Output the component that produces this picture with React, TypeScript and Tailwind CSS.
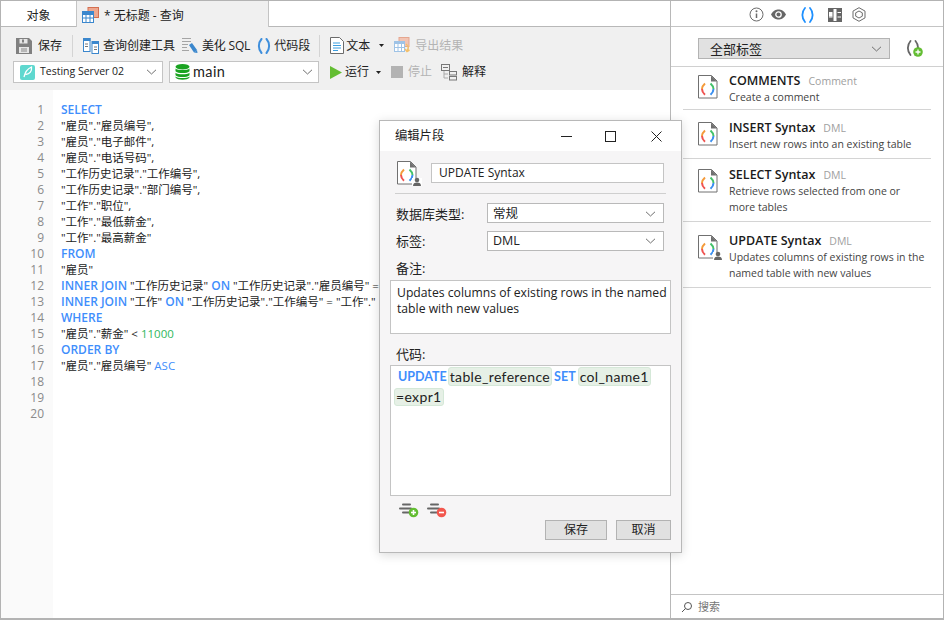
import React from "react";

const FONT = `"Open Sans","Noto Sans CJK SC",sans-serif`;

const Chevron = ({ c = "#6e6e6e" }: { c?: string }) => (
  <svg width="11" height="6" viewBox="0 0 11 6" fill="none"><path d="M1 .8 5.500 5 10 .8" stroke={c} strokeWidth="1" /></svg>
);
const Caret = () => (
  <svg width="5" height="3" viewBox="0 0 5 3"><path d="M0 0h5L2.500 3z" fill="#222" /></svg>
);
const Parens = ({ l = "#3f8fdc", r = "#3f8fdc", w = 14, h = 16, sw = 2 }: { l?: string; r?: string; w?: number; h?: number; sw?: number }) => (
  <svg width={w} height={h} viewBox="0 0 14 16" fill="none">
    <path d="M4.500 1C1 5 1 11 4.500 15" stroke={l} strokeWidth={sw} strokeLinecap="round" />
    <path d="M9.500 1C13 5 13 11 9.500 15" stroke={r} strokeWidth={sw} strokeLinecap="round" />
  </svg>
);
const SnippetIcon = ({ user = false }: { user?: boolean }) => (
  <svg width="26" height="26" viewBox="0 0 26 26" fill="none">
    <path d="M1.500 1.500h13l5.500 5.500v17h-18.500z" fill="#fff" stroke="#707070" />
    <path d="M14 1.500v6h6z" fill="#707070" />
    <path d="M8 9.500C5.200 12 5 14 5 15" stroke="#f49a3a" strokeWidth="2" />
    <path d="M5 15C5 17 6 19 8 20.800" stroke="#ef5350" strokeWidth="2" />
    <path d="M13.500 9.500C16.200 12 16.500 14 16.500 15" stroke="#43c26b" strokeWidth="2" />
    <path d="M16.500 15C16.500 17 15.500 19 13.500 20.800" stroke="#3a8ff0" strokeWidth="2" />
    {user && (
      <g fill="#666">
        <rect x="16" y="18" width="10" height="8" fill="#fff" />
        <circle cx="21" cy="20" r="2.300" />
        <path d="M17 26c0-2.500 1.500-3.500 4-3.500s4 1 4 3.500z" />
      </g>
    )}
  </svg>
);

const Kw = ({ children }: { children: React.ReactNode }) => <span className="text-[12px] font-semibold text-[#3f8efc]">{children}</span>;

const sqlLines: React.ReactNode[] = [
  <Kw>SELECT</Kw>,
  '"雇员"."雇员编号",',
  '"雇员"."电子邮件",',
  '"雇员"."电话号码",',
  '"工作历史记录"."工作编号",',
  '"工作历史记录"."部门编号",',
  '"工作"."职位",',
  '"工作"."最低薪金",',
  '"工作"."最高薪金"',
  <Kw>FROM</Kw>,
  '"雇员"',
  <><Kw>INNER JOIN</Kw> "工作历史记录" <Kw>ON</Kw> "工作历史记录"."雇员编号" =</>,
  <><Kw>INNER JOIN</Kw> "工作" <Kw>ON</Kw> "工作历史记录"."工作编号" = "工作"."</>,
  <Kw>WHERE</Kw>,
  <>"雇员"."薪金" &lt; <span className="text-[#2fb75c]">11000</span></>,
  <Kw>ORDER BY</Kw>,
  <>"雇员"."雇员编号" <span className="text-[#3f8efc]">ASC</span></>,
  "",
  "",
  "",
];

const snippets = [
  { title: "COMMENTS", tag: "Comment", desc: "Create a comment", cls: "h-[43px] pt-[6px]" },
  { title: "INSERT Syntax", tag: "DML", desc: "Insert new rows into an existing table", cls: "h-[49px] pt-[10px]" },
  { title: "SELECT Syntax", tag: "DML", desc: "Retrieve rows selected from one or more tables", cls: "h-[63px] pt-[8px]" },
  { title: "UPDATE Syntax", tag: "DML", desc: "Updates columns of existing rows in the named table with new values", cls: "h-[66px] pt-[11px]", user: true },
];

const SelectBox = ({ children, className }: { children: React.ReactNode; className: string }) => (
  <div className={`flex h-[20px] items-center border border-[#b9b9b9] bg-white pr-[7px] ${className}`}>
    <div className="min-w-0 flex-1 text-[12.500px] leading-[16px]">{children}</div>
    <Chevron />
  </div>
);

const Chip = ({ children, className = "" }: { children: React.ReactNode; className?: string }) => (
  <span className={`inline-flex items-center rounded-[3px] border border-[#d5e8d8] bg-[#e6f0e6] px-px text-[14px] tracking-[.35px] text-[#222] ${className}`}>{children}</span>
);

const LinesIcon = ({ add }: { add: boolean }) => (
  <svg width="20" height="15" viewBox="0 0 20 15" fill="none">
    <path d="M4 1.500h7M1 5.500h11M4 9.500h6" stroke="#666" strokeWidth="2" strokeLinecap="round" />
    <circle cx="14.500" cy="9.500" r="4.800" fill={add ? "#63bd32" : "#f2574e"} />
    <path d="M12 9.500h5" stroke="#fff" strokeWidth="1.600" />
    {add && <path d="M14.500 7v5" stroke="#fff" strokeWidth="1.600" />}
  </svg>
);

export default function App() {
  return (
    <div className="relative flex h-[620px] w-[944px] overflow-hidden border-x border-t border-b-2 border-[#b3b3b3] bg-white text-[12px] text-[#222]" style={{ fontFamily: FONT }}>
      {/* Left column */}
      <div className="flex h-full w-[670px] flex-col border-r border-[#b8b8b8]">
        <div className="flex h-[26px] border-b border-[#b8b8b8] bg-white">
          <div className="flex w-[75px] items-center justify-center pt-[4px]">对象</div>
          <div className="-mb-px flex w-[193px] items-center gap-[5px] border-x border-[#c4c4c4] bg-[#f0f0f0] pl-[5px] pt-[3px]">
            <svg width="17" height="17" viewBox="0 0 17 17">
              <rect x="6" y="0.500" width="10.500" height="10" fill="#eea78f" stroke="#d46f50" />
              <rect x="0.500" y="4.500" width="11" height="11" fill="#fff" stroke="#3b87cd" />
              <path d="M0 5h12v3H0z" fill="#3b87cd" />
              <path d="M4 8v8M8 8v8M0 11h12" stroke="#3b87cd" />
            </svg>
            <span>* 无标题 - 查询</span>
          </div>
        </div>

        <div className="flex h-[63px] flex-col bg-[#f0f0f0]">
          <div className="flex h-[34px] items-center pl-[15px] pt-[3px]">
            <svg width="16" height="16" viewBox="0 0 16 16">
              <path d="M0 0h13l3 3v13H0z" fill="#808080" />
              <rect x="3.500" y="1" width="8" height="4.500" fill="#e6e6e6" />
              <rect x="6" y="1.500" width="2" height="3" fill="#808080" />
              <rect x="3" y="9" width="10" height="6" fill="#e6e6e6" />
              <path d="M5 11h6M5 13h6" stroke="#888" />
            </svg>
            <span className="ml-[6px]">保存</span>
            <div className="ml-[10px] h-[22px] w-px bg-[#d4d4d4]" />
            <svg className="ml-[10px]" width="16" height="16" viewBox="0 0 16 16" fill="none">
              <rect x=".5" y=".5" width="6.500" height="13" fill="#fff" stroke="#3b87cd" />
              <rect x="9" y="3.500" width="6.500" height="12" fill="#fff" stroke="#3b87cd" />
              <path d="M0 0h7.500v3H0zM9 3h7v3H9z" fill="#3b87cd" />
              <path d="M2 6h3M2 8.500h3M11 9h3M11 11.500h3" stroke="#777" />
            </svg>
            <span className="ml-[4px]">查询创建工具</span>
            <svg className="ml-[7px]" width="16" height="17" viewBox="0 0 16 17" fill="none">
              <path d="M0 1.500h9M0 4.500h9M0 7.500h6M0 10.500h5M0 13.500h7" stroke="#a5a5a5" />
              <path d="M7 8l3-2 5 7-3 2.500z" fill="#3b87cd" />
              <path d="M12 15.500l3-2.500 .5 3z" fill="#3b87cd" />
            </svg>
            <span className="ml-[4px] tracking-[-.2px]">美化 SQL</span>
            <span className="ml-[7px] flex"><Parens /></span>
            <span className="ml-[3px]">代码段</span>
            <div className="ml-[9px] h-[22px] w-px bg-[#d4d4d4]" />
            <svg className="ml-[10px]" width="14" height="17" viewBox="0 0 14 17" fill="none">
              <path d="M.5.500h9l4 4v12H.5z" fill="#fff" stroke="#6b6b6b" />
              <path d="M3 6h7M3 8.500h8M3 11h8M3 13.500h5" stroke="#3b9ee0" />
            </svg>
            <span className="ml-[2px]">文本</span>
            <span className="ml-[9px] flex"><Caret /></span>
            <svg className="ml-[10px]" width="17" height="18" viewBox="0 0 17 18" fill="none">
              <rect x="5" y=".5" width="10" height="9" fill="#f2c4b3" stroke="#e5a68f" />
              <rect x="0.500" y="4.500" width="10" height="10" fill="#fff" stroke="#9fc3e6" />
              <path d="M0 4h11v3H0z" fill="#9fc3e6" />
              <path d="M4 7v8M7.500 7v8M0 10.500h11" stroke="#9fc3e6" />
              <path d="M12 7c3 2 3 4 1 7M11 12l2 2.500 2.500-1.500" stroke="#f3bf6a" strokeWidth="1.500" />
            </svg>
            <span className="ml-[4px] text-[#b4b4b4]">导出结果</span>
          </div>
          <div className="flex h-[22px] items-center pl-[12px]">
            <div className="flex h-[22px] w-[150px] items-center border border-[#c4c4c4] bg-white pl-[6px] pr-[5px]">
              <div className="flex h-[15px] w-[15px] items-center justify-center rounded-[2px] bg-[#5fd8cf]">
                <svg width="11" height="12" viewBox="0 0 11 12" fill="none">
                  <path d="M2 11C3 6 5 3 9.500 1 10 5 8 8 3.500 8.500" stroke="#fff" strokeWidth="1.300" />
                </svg>
              </div>
              <span className="ml-[5px] flex-1 text-[10.500px]">Testing Server 02</span>
              <Chevron />
            </div>
            <div className="ml-[6px] flex h-[22px] w-[150px] items-center border border-[#c4c4c4] bg-white pl-[5px] pr-[5px]">
              <svg width="15" height="16" viewBox="0 0 15 16">
                <ellipse cx="7.500" cy="2.800" rx="7" ry="2.800" fill="#1aa321" />
                <path d="M.5 4.500c2 2 12 2 14 0v2.700c-2 2.500-12 2.500-14 0zM.5 8.800c2 2 12 2 14 0v2.400c-2 2.500-12 2.500-14 0zM.5 12.500c2 2 12 2 14 0v1c-2 3-12 3-14 0z" fill="#1aa321" />
              </svg>
              <span className="ml-[3px] flex-1 text-[14.500px] leading-none tracking-[.4px]" style={{ fontFamily: "Lato, sans-serif" }}>main</span>
              <Chevron />
            </div>
            <svg className="ml-[10px]" width="13" height="13" viewBox="0 0 13 13"><path d="M1 0l12 6.500L1 13z" fill="#63bd32" /></svg>
            <span className="ml-[3px]">运行</span>
            <span className="ml-[7px] flex"><Caret /></span>
            <div className="ml-[10px] h-[12px] w-[12px] bg-[#b3b3b3]" />
            <span className="ml-[5px] text-[#b4b4b4]">停止</span>
            <svg className="ml-[9px]" width="18" height="17" viewBox="0 0 18 17" fill="none" stroke="#777">
              <rect x=".5" y=".5" width="8" height="6" />
              <path d="M2 3.500h5" />
              <path d="M3 7v7h4M3 10h4" stroke="#aaa" />
              <rect x="8.500" y="7.500" width="7" height="3.500" />
              <rect x="8.500" y="12.500" width="7" height="3.500" />
            </svg>
            <span className="ml-[3px]">解释</span>
          </div>
          <div className="flex-1" />
        </div>

        <div className="flex flex-1 overflow-hidden bg-white">
          <div className="w-[52px] shrink-0 bg-[#fafafa] pt-[12px] pr-[9px] text-right text-[12px] leading-[16px] text-[#8a8a8a]">
            {sqlLines.map((_, i) => <div key={i}>{i + 1}</div>)}
          </div>
          <div className="w-[326px] shrink-0 overflow-hidden whitespace-nowrap pl-[8px] pt-[12px] text-[11.500px] leading-[16px]">
            {sqlLines.map((l, i) => <div className="h-[16px]" key={i}>{l}</div>)}
          </div>
        </div>
      </div>

      {/* Right column */}
      <div className="flex h-full flex-1 flex-col">
        <div className="flex h-[26px] items-center justify-center border-b border-[#c4c4c4] pt-[2px]">
          <svg width="15" height="15" viewBox="0 0 15 15" fill="none">
            <circle cx="7.500" cy="7.500" r="6.500" stroke="#6b6b6b" />
            <path d="M7.500 6.500v4.500" stroke="#6b6b6b" strokeWidth="1.500" />
            <circle cx="7.500" cy="4.200" r="1" fill="#6b6b6b" />
          </svg>
          <svg className="ml-[7px]" width="15" height="15" viewBox="0 0 15 15">
            <path d="M0 7.500C2 3.500 5 2.500 7.500 2.500s5.500 1 7.500 5c-2 4-5 5-7.500 5S2 11.500 0 7.500z" fill="#666" />
            <circle cx="7.500" cy="7.500" r="2.700" fill="none" stroke="#fff" strokeWidth="1.300" />
          </svg>
          <span className="ml-[14px] flex"><Parens l="#1e90ff" r="#1e90ff" w={15} h={16} sw={1.800} /></span>
          <svg className="ml-[13px]" width="14" height="14" viewBox="0 0 14 14" fill="none">
            <rect x=".5" y=".5" width="13" height="13" fill="#fff" stroke="#666" />
            <path d="M0 0h5.500v14H0zM8.500 0H14v14H8.500z" fill="#666" />
            <path d="M1 4.500h3.500M1 9h3.500M9.500 4.500H13M9.500 9H13" stroke="#fff" />
            <rect x="1" y="5" width="3.500" height="3.500" fill="#fff" />
          </svg>
          <svg className="ml-[10px]" width="14" height="15" viewBox="0 0 14 15" fill="none" stroke="#6b6b6b">
            <path d="M7 .7l6 3.400v6.800l-6 3.400-6-3.400V4.100z" />
            <path d="M7 4l3.300 1.800v3.400L7 11 3.700 9.200V5.800z" />
          </svg>
        </div>
        <div className="flex h-[40px] items-center border-b border-[#d0d0d0] pl-[27px] pt-[4px]">
          <div className="flex h-[21px] w-[192px] items-center border border-[#b3b3b3] bg-[#e1e1e1] pl-[11px] pr-[7px]">
            <span className="flex-1 text-[13px] leading-[16px]">全部标签</span>
            <Chevron />
          </div>
          <div className="relative ml-[15px] h-[18px] w-[18px]">
            <Parens l="#666" r="#666" w={16} h={16} sw={1.800} />
            <svg className="absolute left-[8px] top-[7px]" width="10" height="10" viewBox="0 0 10 10">
              <circle cx="5" cy="5" r="4.800" fill="#63bd32" />
              <path d="M2.500 5h5M5 2.500v5" stroke="#fff" strokeWidth="1.300" />
            </svg>
          </div>
        </div>
        <div className="flex-1 px-[12px]">
          {snippets.map((s) => (
            <div key={s.title} className={`flex border-b border-[#d4d4d4] pl-[14px] ${s.cls}`}>
              <div className="w-[32px] shrink-0 pt-[1px]"><SnippetIcon user={s.user} /></div>
              <div className="min-w-0">
                <div className="flex items-baseline gap-[8px] leading-[16px]">
                  <span className="text-[12.500px] font-semibold text-[#1a1a1a]">{s.title}</span>
                  <span className="text-[10.500px] text-[#a0a0a0]">{s.tag}</span>
                </div>
                <div className="w-[198px] text-[10.500px] leading-[16px] text-[#444]">{s.desc}</div>
              </div>
            </div>
          ))}
        </div>
        <div className="flex h-[24px] items-center gap-[5px] border-t border-[#c4c4c4] pl-[10px] pt-[1px] text-[11px] text-[#777]">
          <svg width="12" height="12" viewBox="0 0 12 12" fill="none" stroke="#555">
            <circle cx="7" cy="5" r="3.500" />
            <path d="M4.500 7.500 1 11" />
          </svg>
          搜索
        </div>
      </div>

      {/* Dialog */}
      <div className="absolute left-[378px] top-[119px] flex h-[433px] w-[303px] flex-col border border-[#b8b8b8] bg-[#f6f5f6] shadow-[0_2px_10px_rgba(0,0,0,0.15)]">
        <div className="flex h-[30px] shrink-0 items-center bg-white pl-[15px]">
          <span className="flex-1 text-[12.300px]">编辑片段</span>
          <svg className="mr-[33px]" width="11" height="1" viewBox="0 0 11 1"><path d="M0 0h11v1H0z" fill="#222" /></svg>
          <svg className="mr-[35px]" width="11" height="11" viewBox="0 0 11 11" fill="none"><rect x=".5" y=".5" width="10" height="10" stroke="#222" /></svg>
          <svg className="mr-[19px]" width="11" height="11" viewBox="0 0 11 11" fill="none"><path d="M.5.500l10 10M10.500.500l-10 10" stroke="#222" /></svg>
        </div>
        <div className="flex flex-1 flex-col px-[10px]">
          <div className="mx-[5px] flex h-[43px] items-center border-b border-[#cfcfcf] pt-[1px]">
            <div className="ml-[1px] flex w-[35px]"><SnippetIcon user /></div>
            <div className="mr-[2px] flex h-[20px] flex-1 items-center border border-[#c4c4c4] bg-white pl-[7px] pt-[1px]">UPDATE Syntax</div>
          </div>
          <div className="mx-[6px] mt-[9px] flex h-[20px] items-center">
            <span className="w-[91px] pt-[2px] text-[13px] leading-[16px]">数据库类型:</span>
            <SelectBox className="w-[177px] pl-[5px] pt-[1px]">常规</SelectBox>
          </div>
          <div className="mx-[6px] mt-[8px] flex h-[20px] items-center">
            <span className="w-[91px] text-[13px] leading-[16px]">标签:</span>
            <SelectBox className="w-[177px] pl-[5px]">DML</SelectBox>
          </div>
          <div className="ml-[6px] mt-[8px] h-[21px] text-[13px] leading-[18px]">备注:</div>
          <div className="h-[54px] border border-[#c4c4c4] bg-white pl-[6px] pt-[4px] text-[12.200px] leading-[16px]">
            Updates columns of existing rows in the named table with new values
          </div>
          <div className="ml-[6px] mt-[11px] h-[20px] text-[13px] leading-[18px]">代码:</div>
          <div className="h-[131px] border border-[#c4c4c4] bg-white pl-[3px] pt-[1px]" style={{ fontFamily: "Lato, sans-serif" }}>
            <div className="flex h-[19px] items-center whitespace-nowrap">
              <span className="ml-[4px] pt-[1px] text-[12.500px] font-bold text-[#3f8efc]">UPDATE</span>
              <Chip className="ml-[1px] h-[19px]">table_reference</Chip>
              <span className="ml-[2px] pt-[1px] text-[12.500px] font-bold text-[#3f8efc]">SET</span>
              <Chip className="ml-[2px] h-[19px]">col_name1</Chip>
            </div>
            <div className="mt-[2px] flex"><Chip className="h-[18px] pb-[1px]">=expr1</Chip></div>
          </div>
          <div className="ml-[9px] mt-[7px] flex gap-[8px]">
            <LinesIcon add />
            <LinesIcon add={false} />
          </div>
          <div className="mt-[2px] flex justify-end gap-[9px]">
            <div className="flex h-[20px] w-[62px] items-center justify-center border border-[#b3b3b3] bg-[#e1e1e1]">保存</div>
            <div className="flex h-[20px] w-[55px] items-center justify-center border border-[#b3b3b3] bg-[#e1e1e1]">取消</div>
          </div>
        </div>
      </div>
    </div>
  );
}
